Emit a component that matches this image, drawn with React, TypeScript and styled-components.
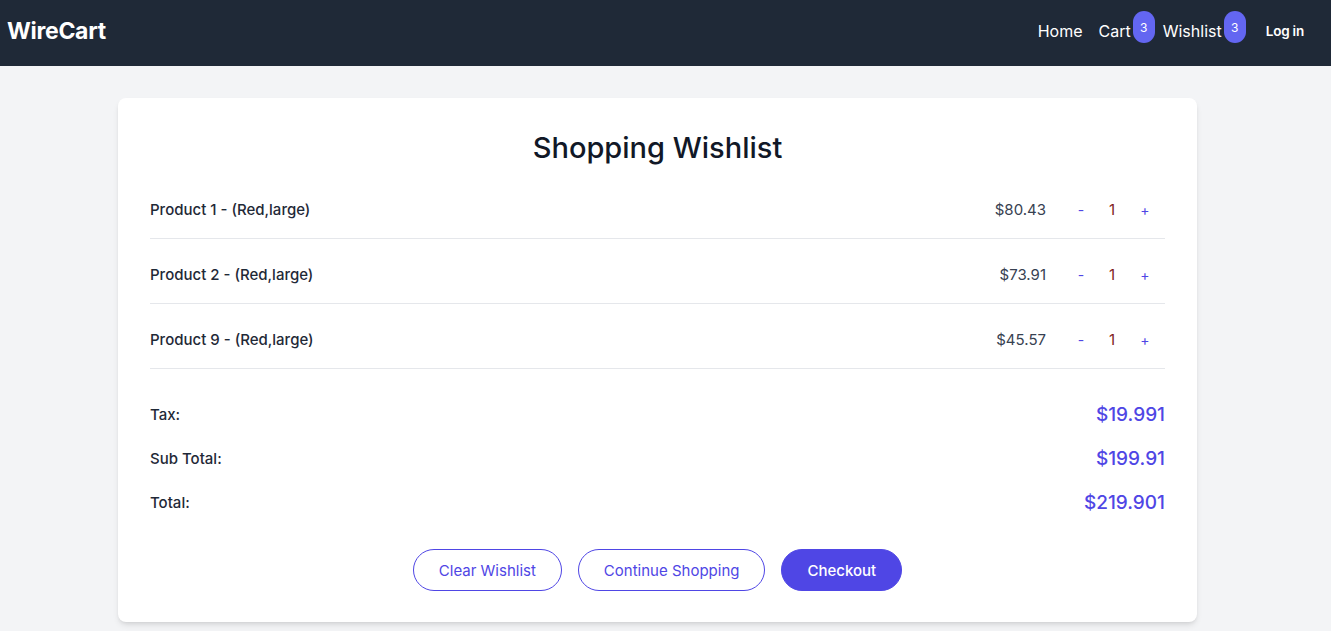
import React from "react";
import styled, { createGlobalStyle } from "styled-components";

const Global = createGlobalStyle`
  html, body { margin: 0; padding: 0; }
  body { background: #f3f4f6; font-family: Inter, "Noto Sans", sans-serif; color: #1f2937; }
  * { box-sizing: border-box; }
`;

const Header = styled.header`
  height: 66px;
  background: #1f2937;
  display: flex;
  align-items: center;
  justify-content: space-between;
  padding: 0 27px 4px 7px;
`;

const Logo = styled.div`
  color: #fff;
  font-size: 23px;
  font-weight: 700;
  letter-spacing: -0.3px;
`;

const Nav = styled.nav`
  display: flex;
  align-items: center;
`;

const NavLink = styled.a<{ $bold?: boolean; $gap?: number }>`
  color: #fff;
  font-size: ${(p) => (p.$bold ? "13.5px" : "16px")};
  font-weight: ${(p) => (p.$bold ? 600 : 400)};
  letter-spacing: ${(p) => (p.$bold ? "-0.2px" : "0")};
  text-decoration: none;
  margin-left: ${(p) => (p.$gap ?? 16)}px;
  display: flex;
  align-items: center;
`;

const Badge = styled.span`
  display: inline-flex;
  justify-content: center;
  padding-top: 9px;
  width: 22px;
  height: 32px;
  border-radius: 11px;
  background: #6366f1;
  color: #fff;
  font-size: 12px;
  margin-left: 2px;
  align-self: flex-start;
  margin-top: -8px;
`;

const Main = styled.main`
  padding: 32px 16px 9px 0;
  display: flex;
  justify-content: center;
`;

const Card = styled.section`
  width: 1079px;
  background: #fff;
  border-radius: 8px;
  box-shadow: 0 4px 6px -1px rgba(0,0,0,0.1), 0 2px 4px -2px rgba(0,0,0,0.1);
  padding: 30px 32px 31px;
`;

const Title = styled.h1`
  margin: 0 0 6px;
  text-align: center;
  font-size: 29px;
  font-weight: 500;
  line-height: 40px;
  color: #111827;
`;

const Row = styled.div`
  display: flex;
  align-items: center;
  height: 65px;
  border-bottom: 1px solid #e5e7eb;
  font-size: 15px;
  font-weight: 500;
  padding-top: 7px;
`;

const Name = styled.div`
  flex: 1;
  color: #1f2937;
`;

const Price = styled.div`
  font-weight: 400;
  color: #374151;
`;

const Qty = styled.div`
  display: flex;
  align-items: center;
  margin-left: 29px;
  margin-right: 14px;
`;

const QtyBtn = styled.span`
  color: #4f46e5;
  font-weight: 400;
  font-size: 14px;
  width: 12px;
  text-align: center;
`;

const QtyVal = styled.span`
  color: #7f1d1d;
  font-weight: 400;
  width: 38px;
  text-align: center;
  margin: 0 8px 0 6px;
`;

const Summary = styled.div`
  padding-top: 34px;
  display: flex;
  flex-direction: column;
  gap: 22px;
`;

const SumRow = styled.div`
  display: flex;
  justify-content: space-between;
  align-items: center;
  height: 22px;
`;

const SumLabel = styled.span`
  font-size: 15px;
  font-weight: 500;
  color: #1f2937;
`;

const SumValue = styled.span`
  font-size: 19px;
  font-weight: 500;
  color: #4f46e5;
`;

const Actions = styled.div`
  display: flex;
  justify-content: center;
  gap: 16px;
  margin-top: 36px;
`;

const Button = styled.button<{ $primary?: boolean }>`
  height: 42px;
  padding: 0 25px;
  border-radius: 9999px;
  font-family: inherit;
  font-size: 15px;
  border: 1px solid #4f46e5;
  background: ${(p) => (p.$primary ? "#4f46e5" : "#fff")};
  color: ${(p) => (p.$primary ? "#fff" : "#4f46e5")};
  font-weight: ${(p) => (p.$primary ? 500 : 400)};
`;

const items = [
  { name: "Product 1 - (Red,large)", price: "$80.43" },
  { name: "Product 2 - (Red,large)", price: "$73.91" },
  { name: "Product 9 - (Red,large)", price: "$45.57" },
];

export default function App() {
  return (
    <>
      <Global />
      <Header>
        <Logo>WireCart</Logo>
        <Nav>
          <NavLink>Home</NavLink>
          <NavLink>Cart<Badge>3</Badge></NavLink>
          <NavLink $gap={8}>Wishlist<Badge>3</Badge></NavLink>
          <NavLink $bold $gap={20}>Log in</NavLink>
        </Nav>
      </Header>
      <Main>
        <Card>
          <Title>Shopping Wishlist</Title>
          {items.map((it) => (
            <Row key={it.name}>
              <Name>{it.name}</Name>
              <Price>{it.price}</Price>
              <Qty>
                <QtyBtn>-</QtyBtn>
                <QtyVal>1</QtyVal>
                <QtyBtn>+</QtyBtn>
              </Qty>
            </Row>
          ))}
          <Summary>
            <SumRow><SumLabel>Tax:</SumLabel><SumValue>$19.991</SumValue></SumRow>
            <SumRow><SumLabel>Sub Total:</SumLabel><SumValue>$199.91</SumValue></SumRow>
            <SumRow><SumLabel>Total:</SumLabel><SumValue>$219.901</SumValue></SumRow>
          </Summary>
          <Actions>
            <Button>Clear Wishlist</Button>
            <Button>Continue Shopping</Button>
            <Button $primary>Checkout</Button>
          </Actions>
        </Card>
      </Main>
    </>
  );
}
